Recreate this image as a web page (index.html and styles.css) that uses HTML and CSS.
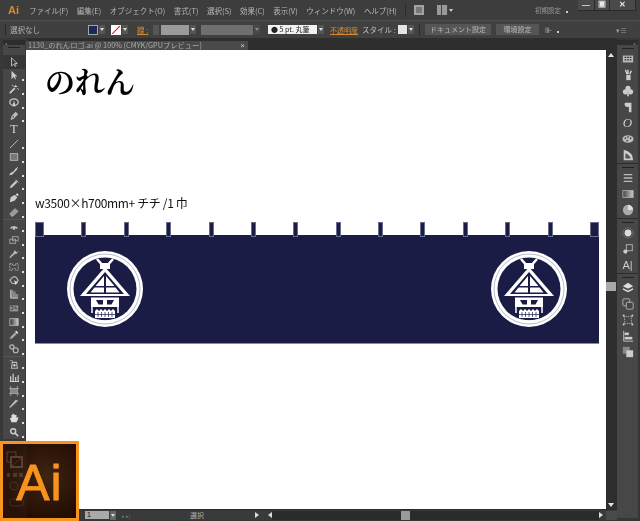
FILE: index.html
```html
<!DOCTYPE html>
<html lang="ja">
<head>
<meta charset="utf-8">
<title>のれん</title>
<link rel="stylesheet" href="styles.css">
</head>
<body>
<svg class="defs" width="0" height="0">
  <defs>
    <g id="emblem">
      <circle cx="38" cy="38" r="38" fill="#fff"/>
      <circle cx="38" cy="38" r="31.500" fill="#1a1c45"/>
      <circle cx="38" cy="38" r="35" fill="none" stroke="#9b9db4" stroke-width=".7"/>
      <path d="M30 8L38 17L46 8" stroke="#fff" stroke-width="2.500" fill="none"/>
      <path d="M33 12H43V18H33Z" fill="#fff"/>
      <path d="M38 16L63 45H13Z" fill="#fff"/>
      <path d="M38 21L57 43H19Z" fill="#1a1c45"/>
      <path d="M37 25V35H28.500ZM39 25V35H47.500ZM37 36.500V41.500H23.500L27.500 36.500ZM39 36.500V41.500H52.500L48.500 36.500Z" fill="#fff"/>
      <path d="M24 46.500H52V56H24Z" fill="#fff"/>
      <path d="M29 49H36V53.500H31.500ZM47 49H40V53.500H44.500Z" fill="#1a1c45"/>
      <path d="M25 56V62M51 56V62" stroke="#fff" stroke-width="1.500"/>
      <path d="M28 60L30 58L32 60L34 58L36 60L38 58L40 60L42 58L44 60L46 58L48 60V67H28Z" fill="#fff"/>
      <path d="M31 61V66M34.500 61V66M38 61V66M41.500 61V66M45 61V66M28 63.500H48" stroke="#1a1c45" stroke-width=".7" fill="none"/>
      <path d="M31 69.200Q38 70.500 46 69.200" stroke="#fff" stroke-width="1.200" fill="none"/>
    </g>
  </defs>
</svg>
<div class="app">
  <header class="titlebar">
    <span class="ai-mark">Ai</span>
    <nav class="menu">
      <span>ファイル(F)</span><span>編集(E)</span><span>オブジェクト(O)</span><span>書式(T)</span><span>選択(S)</span><span>効果(C)</span><span>表示(V)</span><span>ウィンドウ(W)</span><span>ヘルプ(H)</span>
    </nav>
    <span class="sep"></span>
    <span class="bridge"></span>
    <span class="arrange"><i></i><i></i></span><span class="caret"></span>
    <span class="workspace">初期設定</span><span class="dot"></span>
    <div class="winbtns"><span class="wb">—</span><span class="wb mid">▣</span><span class="wb wide">✕</span></div>
  </header>

  <div class="controlbar">
    <span class="grip"></span>
    <span class="sel-label">選択なし</span>
    <span class="fill-swatch"></span><span class="drop"></span>
    <span class="stroke-swatch"><svg viewBox="0 0 10 10" width="8" height="8"><path d="M0 10L10 0" stroke="#e02020" stroke-width="1.400"/></svg></span><span class="drop"></span>
    <span class="link-label stroke-lbl">線 :</span>
    <span class="spin"></span>
    <span class="field w28"></span><span class="drop"></span>
    <span class="field dim w52"></span><span class="drop dim"></span>
    <span class="brush">● 5 pt. 丸筆</span><span class="drop"></span>
    <span class="link-label opacity">不透明度</span>
    <span class="style-lbl">スタイル :</span>
    <span class="style-swatch"></span><span class="drop"></span>
    <span class="sep ctl"></span>
    <span class="btn doc">ドキュメント設定</span>
    <span class="btn env">環境設定</span>
    <span class="mini">⊪</span><span class="dot"></span>
    <span class="panelmenu">▾≡</span>
  </div>

  <div class="workarea">
    <aside class="tools">
      <div class="collapse">»</div>
      <div class="tool-head"><span class="grab"></span></div>
      <span class="tool active"><svg viewBox="0 0 12 12"><path d="M3 1V11L5.500 8.500L7.500 11.500L8.500 10.500L6.800 7.800H10Z" fill="#3a3a3a" stroke="#ccc"/></svg></span>
      <span class="tool"><svg viewBox="0 0 12 12"><path d="M3 1V11L5.500 8.500L7.500 11.500L8.500 10.500L6.800 7.800H10Z" fill="#ccc"/></svg></span>
      <span class="tool"><svg viewBox="0 0 12 12"><path d="M1 11L7 5" stroke="#ccc" stroke-width="2"/><path d="M8 1V4M6 3H10M10 5L12 7M4 1L5 3" stroke="#ddd"/></svg></span>
      <span class="tool"><svg viewBox="0 0 12 12"><ellipse cx="6" cy="5" rx="5" ry="4" fill="none" stroke="#ccc" stroke-width="1.500"/><path d="M6 3L4 10H8Z" fill="#ccc"/></svg></span>
      <span class="tool"><svg viewBox="0 0 12 12"><path d="M2 11L3 6L8 1L11 4L6 9Z" fill="#bbb"/><circle cx="5" cy="7" r="1" fill="#444"/></svg></span>
      <span class="tool t">T</span>
      <span class="tool"><svg viewBox="0 0 12 12"><path d="M1 11L11 1" stroke="#ccc"/></svg></span>
      <span class="tool"><svg viewBox="0 0 12 12"><rect x="1.500" y="2" width="9" height="8" fill="#777" stroke="#bbb"/></svg></span>
      <span class="tool"><svg viewBox="0 0 12 12"><path d="M11 1Q8 2 5 7Q1 8 0.500 11Q4 11 6 8Q10 5 11 1Z" fill="#ccc"/></svg></span>
      <span class="tool"><svg viewBox="0 0 12 12"><path d="M1 11L2 8L8 2L10 4L4 10Z" fill="#ccc"/><path d="M8 1L11 4" stroke="#eee"/></svg></span>
      <span class="tool"><svg viewBox="0 0 12 12"><path d="M1 10L2 5L7 2L10 5L7 9L2 11Z" fill="#ccc"/><path d="M9 1L11 3" stroke="#eee" stroke-width="2"/></svg></span>
      <span class="tool"><svg viewBox="0 0 12 12"><path d="M1 8L7 2L11 5L5 11H3Z" fill="#999" stroke="#ccc" stroke-width=".6"/></svg></span>
      <span class="group"></span>
      <span class="tool"><svg viewBox="0 0 12 12"><path d="M2 9A5 5 0 0 1 10 9" fill="none" stroke="#bbb" stroke-width="2"/><circle cx="6" cy="9" r="1.500" fill="#ccc"/></svg></span>
      <span class="tool"><svg viewBox="0 0 12 12"><rect x="1" y="5" width="7" height="5" fill="none" stroke="#aaa"/><rect x="4" y="2" width="7" height="5" fill="none" stroke="#aaa"/></svg></span>
      <span class="tool"><svg viewBox="0 0 12 12"><path d="M1 11Q2 7 5 6L7 2L9 4L8 6L11 3" fill="#bbb" stroke="#bbb"/></svg></span>
      <span class="tool"><svg viewBox="0 0 12 12"><path d="M1 2H4V4H8V2H11V10H8V8H4V10H1Z" fill="none" stroke="#bbb" stroke-dasharray="2 1"/></svg></span>
      <span class="tool"><svg viewBox="0 0 12 12"><path d="M1 5L5 1H8L11 5L8 9H4Z" fill="none" stroke="#bbb" stroke-width="1.400"/><path d="M6 5L11 8L9 9L8 11Z" fill="#ddd"/></svg></span>
      <span class="tool"><svg viewBox="0 0 12 12"><path d="M2 1H5V3H8V6H11V11H2Z" fill="#888"/><path d="M2 1V11H11" stroke="#ccc" fill="none"/></svg></span>
      <span class="tool"><svg viewBox="0 0 12 12"><rect x="1" y="3" width="10" height="7" fill="#999"/><path d="M2 4H5M6 5H9M3 6H6M7 7H10M2 8H5" stroke="#333"/></svg></span>
      <span class="tool"><svg viewBox="0 0 12 12"><defs><linearGradient id="g1"><stop offset="0" stop-color="#333"/><stop offset="1" stop-color="#ccc"/></linearGradient></defs><rect x="1" y="2" width="10" height="8" fill="url(#g1)" stroke="#bbb"/></svg></span>
      <span class="tool"><svg viewBox="0 0 12 12"><path d="M1 11L2 8L7 3L9 5L4 10Z" fill="#aaa"/><path d="M7 2L9 1L11 3L10 5Z" fill="#ddd"/></svg></span>
      <span class="tool"><svg viewBox="0 0 12 12"><circle cx="3.500" cy="3.500" r="2.500" fill="none" stroke="#bbb" stroke-width="1.400"/><circle cx="8" cy="7.500" r="3" fill="none" stroke="#bbb" stroke-width="1.400"/></svg></span>
      <span class="group"></span>
      <span class="tool"><svg viewBox="0 0 12 12"><path d="M4 4H9L10 11H3Z" fill="none" stroke="#bbb" stroke-width="1.300"/><circle cx="6.500" cy="7.500" r="1.500" fill="#ccc"/><path d="M1 2H4V4" stroke="#aaa" fill="none"/></svg></span>
      <span class="tool"><svg viewBox="0 0 12 12"><path d="M2 11V5M5 11V2M8 11V6M11 11V4M1 11.500H12" stroke="#ccc" stroke-width="1.500"/></svg></span>
      <span class="tool"><svg viewBox="0 0 12 12"><rect x="2" y="3" width="8" height="6" fill="#888"/><path d="M0 3H12M0 9H12M2 0V12M10 0V12" stroke="#bbb" stroke-width=".8"/></svg></span>
      <span class="tool"><svg viewBox="0 0 12 12"><path d="M1 11L11 2L8 1L1 9Z" fill="#bbb"/></svg></span>
      <span class="tool"><svg viewBox="0 0 12 12"><path d="M3 11L1 6L3 6L3 2H4.500V1H6V2H7.500V2.500H9V6L11 4.500V7L9 11Z" fill="#ddd"/></svg></span>
      <span class="tool"><svg viewBox="0 0 12 12"><circle cx="5" cy="5" r="3" fill="none" stroke="#ccc" stroke-width="1.800"/><path d="M7 7L11 11" stroke="#ccc" stroke-width="2"/></svg></span>
    </aside>

    <div class="center">
      <div class="tabbar"><span class="tab">1130_のれんロゴ.ai @ 100% (CMYK/GPUプレビュー)</span><span class="tabclose">×</span></div>
      <div class="canvas-row">
        <main class="canvas">
          <h1 class="heading">のれん</h1>
          <p class="spec">w3500×h700mm+ チチ /1 巾</p>
          <section class="noren">
            <div class="loops">
              <span class="loop first"></span><span class="loop"></span><span class="loop"></span><span class="loop"></span><span class="loop"></span><span class="loop"></span><span class="loop"></span><span class="loop"></span><span class="loop"></span><span class="loop"></span><span class="loop"></span><span class="loop"></span><span class="loop"></span><span class="loop first"></span>
            </div>
            <div class="cloth">
              <svg class="emblem" viewBox="0 0 76 76" width="76" height="76"><use href="#emblem"/></svg>
              <svg class="emblem" viewBox="0 0 76 76" width="76" height="76"><use href="#emblem"/></svg>
            </div>
          </section>
        </main>
        <div class="vscroll">
          <span class="arrow up"></span>
          <span class="track"><span class="thumb"></span></span>
          <span class="arrow down"></span>
        </div>
      </div>
      <div class="statusbar">
        <span class="zoomfield">1</span><span class="drop light"></span>
        <span class="navs">▸ ▸|</span>
        <span class="status-text">選択</span>
        <span class="tri-r"></span>
        <span class="tri-l"></span>
        <span class="htrack"><span class="hthumb"></span></span>
        <span class="tri-r end"></span>
        <span class="corner"></span>
      </div>
    </div>

    <aside class="dock">
      <div class="collapse right">«</div>
      <div class="dock-group">
        <span class="grab"></span>
        <span class="dk"><svg viewBox="0 0 14 12"><rect x="1" y="2" width="12" height="8" fill="#bbb"/><path d="M3 4H5M6 4H8M9 4H11M3 7H5M6 7H8M9 7H11" stroke="#333" stroke-width="1.500"/></svg></span>
        <span class="dk"><svg viewBox="0 0 14 14"><path d="M5 7H10V13H5Z" fill="#ccc"/><path d="M4 1L6 6M7 1V6M11 2L9 6" stroke="#ddd" stroke-width="1.500"/></svg></span>
        <span class="dk"><svg viewBox="0 0 14 14"><circle cx="7" cy="4" r="3" fill="#ccc"/><circle cx="4" cy="8" r="3" fill="#ccc"/><circle cx="10" cy="8" r="3" fill="#ccc"/><path d="M6 13H8V9H6Z" fill="#ccc"/></svg></span>
        <span class="dk"><svg viewBox="0 0 14 14"><path d="M4 2H11V13H8V7H6Q3 7 3 4.500Q3 2 4 2Z" fill="#ccc"/></svg></span>
        <span class="dk it">O</span>
        <span class="dk"><svg viewBox="0 0 14 12"><ellipse cx="7" cy="6" rx="6.500" ry="4.500" fill="#bbb"/><circle cx="4" cy="5" r="1" fill="#444"/><circle cx="7" cy="3.500" r="1" fill="#444"/><circle cx="10" cy="5" r="1" fill="#444"/><circle cx="6" cy="8" r="1" fill="#444"/></svg></span>
        <span class="dk"><svg viewBox="0 0 14 14"><path d="M2 1V13H13Q13 4 2 1Z" fill="#ccc"/><path d="M4 5V11H10Q9 7 4 5Z" fill="#555"/></svg></span>
      </div>
      <div class="dock-group">
        <span class="grab"></span>
        <span class="dk"><svg viewBox="0 0 14 12"><path d="M2 2H12M2 6H12M2 10H12" stroke="#bbb" stroke-width="1.500"/></svg></span>
        <span class="dk"><svg viewBox="0 0 14 12"><defs><linearGradient id="g2"><stop offset="0" stop-color="#444"/><stop offset="1" stop-color="#ccc"/></linearGradient></defs><rect x="1" y="2" width="12" height="8" fill="url(#g2)" stroke="#aaa"/></svg></span>
        <span class="dk"><svg viewBox="0 0 14 14"><circle cx="7" cy="7" r="6" fill="#aaa"/><path d="M7 1A6 6 0 0 1 13 7H7Z" fill="#ddd"/></svg></span>
      </div>
      <div class="dock-group">
        <span class="grab"></span>
        <span class="dk"><svg viewBox="0 0 14 14"><circle cx="7" cy="7" r="4" fill="#ddd"/><circle cx="7" cy="7" r="6" fill="none" stroke="#999" stroke-dasharray="1 1"/></svg></span>
        <span class="dk"><svg viewBox="0 0 14 14"><rect x="5" y="2" width="7" height="7" fill="none" stroke="#bbb"/><circle cx="4" cy="10" r="2.500" fill="#ccc"/></svg></span>
        <span class="dk txt">A|</span>
      </div>
      <div class="dock-group last">
        <span class="grab"></span>
        <span class="dk"><svg viewBox="0 0 14 14"><path d="M7 1L13 5L7 8L1 5Z" fill="#ddd"/><path d="M1 8L7 11L13 8" stroke="#ddd" fill="none" stroke-width="1.500"/></svg></span>
        <span class="dk"><svg viewBox="0 0 14 14"><rect x="1" y="1" width="8" height="8" rx="1" fill="none" stroke="#bbb"/><rect x="5" y="5" width="8" height="8" rx="1" fill="#444" stroke="#bbb"/></svg></span>
        <span class="dk"><svg viewBox="0 0 14 14"><rect x="3" y="3" width="8" height="8" fill="none" stroke="#ccc" stroke-dasharray="1 1"/><path d="M1 1H3V3H1ZM11 1H13V3H11ZM1 11H3V13H1ZM11 11H13V13H11Z" fill="#ddd"/></svg></span>
        <span class="dk"><svg viewBox="0 0 14 14"><path d="M2 1V13H13" stroke="#ccc" fill="none"/><rect x="3" y="3" width="5" height="3" fill="#ccc"/><rect x="3" y="8" width="9" height="3" fill="#ccc"/></svg></span>
        <span class="dk"><svg viewBox="0 0 14 14"><rect x="1" y="1" width="8" height="8" fill="#888"/><rect x="5" y="5" width="8" height="8" fill="#ccc"/></svg></span>
      </div>
    </aside>
  </div>
</div>

<div class="logo-overlay">
  <svg class="logo-ghost" viewBox="0 0 24 74" width="24" height="74">
    <rect x="4" y="8" width="9" height="10" fill="none" stroke="#7a6a5c"/>
    <rect x="8" y="13" width="11" height="10" fill="#2a1a10" stroke="#7a6a5c" stroke-width="2"/>
    <path d="M9 22L18 14" stroke="#a33" stroke-width="1"/>
    <path d="M4 29H7V33H4ZM10 29H14V33H10ZM16 29H20V33H16Z" fill="#6a5a4c"/>
    <circle cx="11" cy="42" r="4" fill="none" stroke="#5a4a3c"/>
    <rect x="7" y="55" width="13" height="7" rx="2" fill="none" stroke="#5a4a3c"/>
  </svg>
  <span class="logo-text">Ai</span>
</div>
</body>
</html>
```

FILE: styles.css
```css
* { box-sizing: border-box; }
html, body { margin: 0; padding: 0; }
body {
  width: 640px;
  height: 521px;
  overflow: hidden;
  background: #3b3b3b;
  font-family: "Noto Sans CJK JP", "Noto Sans", sans-serif;
  color: #c4c4c4;
  position: relative;
}
.defs { position: absolute; }
.app { display: flex; flex-direction: column; height: 521px; }

/* title bar */
.titlebar {
  height: 20px;
  display: flex;
  align-items: center;
  background: #3d3d3d;
  padding-left: 8px;
  font-size: 8px;
  filter: blur(.3px);
  flex: none;
}
.ai-mark { color: #d78a2e; font: bold 11px "Liberation Sans", sans-serif; width: 21px; flex: none; }
.menu { display: flex; justify-content: space-between; width: 376px; padding-right: 8px; flex: none; }
.menu span { white-space: nowrap; color: #b8b8b8; font-size: 7.500px; }
.sep { width: 1px; height: 14px; background: #2b2b2b; display: block; flex: none; }
.bridge { width: 10px; height: 10px; background: #777; border: 2px solid #a4a4a4; margin-left: 8px; flex: none; }
.arrange { display: flex; gap: 2px; width: 11px; height: 10px; background: #999; margin-left: 13px; flex: none; }
.arrange i { flex: 1; border-right: 1px solid #444; }
.caret { width: 4px; height: 3px; border: 2px solid transparent; border-top: 3px solid #ccc; border-bottom: 0; margin: 1px 0 0 1px; flex: none; }
.workspace { margin-left: 82px; width: 26px; color: #999; font-size: 6.500px; white-space: nowrap; flex: none; }
.dot { width: 2px; height: 2px; background: #ccc; margin: 4px 0 0 5px; flex: none; }
.winbtns { display: flex; margin-left: 10px; align-self: flex-start; flex: none; }
.wb {
  width: 17px; height: 11px; background: #4a4a4a; color: #e8e8e8;
  font: bold 8px/10px "Liberation Sans", sans-serif; text-align: center;
  border-bottom: 1px solid #2a2a2a; border-right: 1px solid #2a2a2a;
}
.wb.mid { width: 15px; }
.wb.wide { width: 26px; }

/* control bar */
.controlbar {
  height: 18px;
  display: flex;
  align-items: center;
  background: #404040;
  border-top: 1px solid #4d4d4d;
  padding-left: 5px;
  font-size: 7.500px;
  filter: blur(.25px);
  flex: none;
  white-space: nowrap;
}
.grip { width: 1px; height: 11px; background: #2a2a2a; flex: none; }
.sel-label { margin-left: 4px; width: 78px; color: #b4b4b4; flex: none; }
.fill-swatch { width: 10px; height: 10px; background: #1a2a55; border: 1px solid #9aa; flex: none; }
.drop { width: 6px; height: 9px; background: #555; margin-left: 1px; position: relative; flex: none; }
.drop::after {
  content: ""; position: absolute; left: 1px; top: 3px; width: 0; height: 0;
  border: 2px solid transparent; border-top: 3px solid #ddd;
}
.drop.dim { background: #4a4a4a; }
.drop.dim::after { border-top-color: #888; }
.stroke-swatch { width: 10px; height: 10px; background: #fff; margin-left: 6px; display: flex; align-items: center; justify-content: center; flex: none; }
.stroke-swatch svg { display: block; }
.link-label { color: #d88a34; text-decoration: underline; flex: none; }
.stroke-lbl { width: 13px; margin-left: 9px; }
.opacity { margin-left: 6px; width: 28px; font-size: 7px; }
.spin { width: 6px; height: 10px; background: #555; margin-left: 3px; flex: none; }
.field { height: 10px; background: #9a9a9a; flex: none; margin-left: 2px; }
.field.w28 { width: 28px; }
.field.w52 { width: 52px; margin-left: 5px; background: #6f6f6f; }
.brush { width: 49px; height: 9px; line-height: 9px; background: #f2f2f2; color: #222; font-size: 7px; padding-left: 3px; margin-left: 8px; overflow: hidden; flex: none; }
.style-lbl { margin-left: 4px; width: 36px; color: #c0c0c0; flex: none; }
.style-swatch { width: 9px; height: 9px; background: #e4e4e4; flex: none; }
.sep.ctl { margin: 0 5px 0 5px; height: 12px; }
.btn { height: 11px; line-height: 11px; background: #555; color: #bbb; text-align: center; font-size: 7px; flex: none; }
.btn.doc { width: 66px; }
.btn.env { width: 43px; margin-left: 5px; }
.mini { margin-left: 6px; color: #bbb; font-size: 8px; line-height: 10px; flex: none; }
.panelmenu { margin-left: 57px; color: #999; font-size: 7px; flex: none; }

/* working area */
.workarea { flex: 1; display: flex; min-height: 0; background: #363636; }
.tools {
  width: 26px;
  flex: none;
  display: flex;
  flex-direction: column;
  align-items: center;
  padding: 2px 1px 0 3px;
  background: #383838;
  filter: blur(.3px);
}
.collapse { height: 5px; font-size: 5px; line-height: 5px; color: #aaa; width: 100%; background: #2d2d2d; flex: none; padding-left: 2px; }
.collapse.right { text-align: right; padding: 0 2px 0 0; }
.tool-head { height: 10px; width: 100%; background: #474747; display: flex; justify-content: center; padding-top: 2px; flex: none; }
.tool {
  width: 100%; height: 13.630px; flex: none;
  display: flex; align-items: center; justify-content: center;
  background: #474747; position: relative;
}
.tool svg { width: 10px; height: 10px; display: block; }
.tool:not(.active):not(.t)::after {
  content: ""; position: absolute; right: 1px; bottom: 1px; width: 2px; height: 2px; background: #ddd;
}
.tool.active { background: #363636; }
.tool.t { color: #ddd; font: 12px/13px "Liberation Serif", serif; }
.group { height: 1px; width: 100%; background: #555; flex: none; }

.center { flex: 1; min-width: 0; display: flex; flex-direction: column; padding-bottom: 1px; }
.tabbar {
  height: 12px; flex: none; display: flex; align-items: flex-end; background: #2e2e2e;
  filter: blur(.4px);
}
.tab {
  width: 211px; height: 9px; line-height: 9px; background: #4a4a4a; color: #aaa; font-size: 7.300px;
  white-space: nowrap; overflow: hidden; padding-left: 2px;
}
.tabclose { width: 11px; height: 9px; background: #4a4a4a; color: #ccc; font: 8px/9px "Liberation Sans", sans-serif; text-align: center; }

.canvas-row { flex: 1; min-height: 0; display: flex; }
.canvas { width: 580px; flex: none; background: #fff; color: #000; padding: 12px 0 0 9px; overflow: hidden; filter: blur(.3px); }
.heading {
  margin: 0 0 0 10px; font: bold 30px/36px "Noto Serif CJK JP", "Noto Sans CJK JP", serif;
  color: #000; height: 36px;
}
.spec { margin: 97px 0 0 0; font: 12px/16px "Noto Sans CJK JP", sans-serif; color: #111; height: 16px; letter-spacing: -.35px; white-space: nowrap; }
.noren { margin: 11px 0 0 0; width: 564px; }
.loops { height: 13px; display: flex; justify-content: space-between; }
.loop { width: 5px; height: 15px; background: #1a1c45; outline: 1px solid #6a6c8c; outline-offset: -1px; position: relative; z-index: 1; }
.loop.first { width: 9px; }
.cloth {
  height: 109px; background: #1a1c45; border-bottom: 1px solid #888aa5;
  display: flex; justify-content: space-between; align-items: flex-start;
  padding: 16px 32px 0;
}
.emblem { display: block; }

.vscroll { width: 11px; flex: none; display: flex; flex-direction: column; background: #2e2e2e; }
.arrow { height: 10px; flex: none; position: relative; }
.arrow::after { content: ""; position: absolute; left: 2px; width: 0; height: 0; border: 3px solid transparent; }
.arrow.up::after { top: 0; border-bottom: 4px solid #e4e4e4; }
.arrow.down::after { top: 4px; border-top: 4px solid #e4e4e4; }
.track { flex: 1; padding-top: 222px; }
.thumb { display: block; height: 9px; width: 10px; background: #a8a8a8; }

.statusbar {
  height: 11px; flex: none; display: flex; align-items: center; background: #3a3a3a;
  border-top: 1px solid #2c2c2c; font-size: 7px; margin-left: 52px;
}
.zoomfield { width: 24px; height: 8px; background: #aaa; color: #111; font: 7px/8px "Liberation Sans", sans-serif; padding-left: 2px; margin-left: 7px; flex: none; }
.drop.light { background: #666; }
.navs { color: #777; width: 22px; margin-left: 6px; font-size: 5px; white-space: nowrap; flex: none; }
.status-text { width: 106px; text-align: center; color: #aaa; flex: none; }
.tri-r { width: 0; height: 0; border: 3px solid transparent; border-left: 4px solid #ddd; margin-left: 5px; flex: none; }
.tri-l { width: 0; height: 0; border: 3px solid transparent; border-right: 4px solid #ddd; margin-left: 3px; flex: none; }
.htrack { flex: 1; height: 9px; background: #2b2b2b; padding-left: 129px; }
.hthumb { display: block; width: 9px; height: 9px; background: #9a9a9a; }
.tri-r.end { margin-left: 0; }
.corner { width: 11px; height: 9px; background: #4a4a4a; flex: none; }

/* right dock */
.dock { width: 23px; flex: none; background: #363636; padding-right: 2px; display: flex; flex-direction: column; filter: blur(.3px); }
.dock .collapse { margin-top: 2px; }
.dock-group { width: 100%; background: #474747; border-bottom: 1px solid #2c2c2c; display: flex; flex-direction: column; align-items: center; flex: none; padding-top: 3px; }
.grab { width: 12px; height: 1px; background: #222; flex: none; margin-bottom: 2px; }
.dk { height: 16px; width: 100%; display: flex; align-items: center; justify-content: center; color: #ccc; flex: none; }
.dk svg { width: 12px; height: 12px; display: block; }
.dk.it { font: italic 13px "Liberation Serif", serif; }
.dk.txt { font: 11px "Liberation Sans", sans-serif; }
.dock-group.last { flex: 1 0 auto; margin-bottom: 3px; border-bottom: 0; }

/* logo overlay */
.logo-overlay {
  position: absolute; left: 0; top: 441px; width: 79px; height: 80px;
  border: 3px solid #f7941e;
  background: radial-gradient(circle at 60% 45%, #3f2413, #220c02 75%);
  display: flex; align-items: center; justify-content: center;
}
.logo-ghost { position: absolute; left: 0; top: 0; background: rgba(255,255,255,.05); opacity: .55; }
.logo-text {
  position: relative; color: #f7941e; font: 50px/50px "Liberation Sans", sans-serif;
  -webkit-text-stroke: .8px #f7941e; letter-spacing: 1px; margin-top: 4px;
}
```
